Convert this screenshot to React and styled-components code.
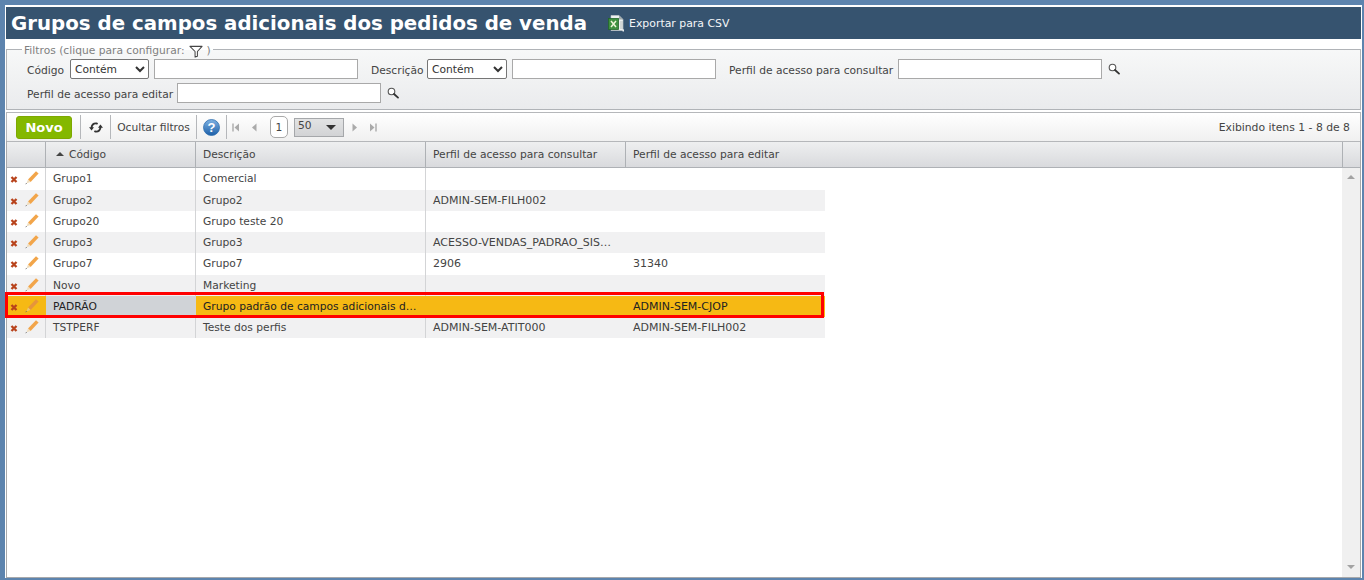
import React from "react";
import styled, { createGlobalStyle } from "styled-components";

const Global = createGlobalStyle`
  html, body { margin: 0; padding: 0; height: 100%; overflow: hidden; }
  body { font-family: "DejaVu Sans", Verdana, sans-serif; font-size: 10.7px; color: #444; background: #5d84ae; }
  * { box-sizing: border-box; }
`;

const Page = styled.div`
  width: 1364px; height: 580px; padding: 5px 2px 2px 5px; background: #5d84ae;
`;
const Frame = styled.div`
  width: 1357px; height: 573px; background: #fff; padding: 2px 0 0 1px; display: flex; flex-direction: column;
`;
const TitleBar = styled.div`
  height: 32px; flex: none; background: #36536f; display: flex; align-items: center; padding-left: 5px; margin-right: 1px;
`;
const Title = styled.h1`
  margin: 0; font: bold 19.8px "DejaVu Sans", sans-serif; color: #fff; white-space: nowrap;
`;
const ExportLink = styled.a`
  display: flex; align-items: center; gap: 4px; margin-left: 21px; color: #f4f6f8; font-size: 10.9px; padding-top: 1px;
`;
const Filters = styled.fieldset`
  margin: 4px 1px 0 0; padding: 0 0 0 20px; height: 67px; flex: none; border: 1px solid #b0b3b7;
  background: linear-gradient(#f7f8f8, #eaebed); min-width: 0;
`;
const Legend = styled.legend`
  margin-left: -5px; padding: 4px 2px 0; color: #7f7f7f; font-size: 10.7px; display: flex; align-items: center; gap: 4px; line-height: 12px; height: 12px;
`;
const FilterRows = styled.div`
  display: flex; flex-direction: column; gap: 4px; margin-top: 4px;
`;
const FilterRow = styled.div`
  display: flex; align-items: center; height: 20px;
`;
const Label = styled.label`
  color: #444; font-size: 10.7px; white-space: nowrap; flex: none; width: ${p => p.$w}px; margin-left: ${p => p.$ml || 0}px; padding-top: 3px;
`;
const Select = styled.select`
  width: ${p => p.$w}px; height: 20px; font: 10.7px "DejaVu Sans", sans-serif; color: #333; background: #fff; border: 1px solid #767676; border-radius: 2px; margin-right: 5px; padding: 0; flex: none;
`;
const TextInput = styled.input`
  width: 204px; height: 20px; border: 1px solid #a9a9a9; background: #fff; padding: 0 2px; flex: none;
`;
const SearchIcon = styled.svg`
  width: 12px; height: 12px; margin-left: 6px; flex: none;
`;
const Toolbar = styled.div`
  margin: 2px 1px 0 0; height: 29px; flex: none; border: 1px solid #b5b7ba; border-bottom: 0; background: linear-gradient(#fff, #f0f0f0); display: flex; align-items: center; padding-left: 9px;
`;
const NewButton = styled.button`
  width: 56px; height: 23px; border: 1px solid #7ea800; border-radius: 3px; background: #84b800; color: #fff; font: bold 13px "DejaVu Sans", sans-serif; padding: 0; margin-right: 8px; flex: none;
`;
const ToolSection = styled.div`
  height: 24px; border-left: 1px solid #b5b7ba; display: flex; align-items: center; justify-content: center; color: #444; width: ${p => p.$w}px; flex: none; white-space: nowrap;
`;
const Pager = styled.div`
  display: flex; align-items: center; height: 24px; border-left: 1px solid #b5b7ba; padding-left: 5px;
`;
const PageNumber = styled.span`
  width: 18px; height: 22px; border: 1px solid #a9a9a9; border-radius: 5px; background: #fff; display: flex; align-items: center; justify-content: center; color: #444; margin-right: 6px;
`;
const PageSize = styled.span`
  width: 50px; height: 19px; border: 1px solid #a5a7aa; background: linear-gradient(#e2e3e4, #d2d3d5); display: flex; justify-content: space-between; align-items: center; padding: 0 7px 3px 3px; color: #444; margin-right: 7px;
`;
const PagerArrow = styled.svg`
  width: 8px; height: 11px; flex: none; margin-right: ${p => p.$mr}px;
`;
const ItemCount = styled.span`
  margin-left: auto; padding-right: 10px; color: #444; font-size: 10.8px;
`;
const Grid = styled.div`
  margin-right: 1px; flex: 1; min-height: 0; border: 1px solid #a8a9ab; border-top: 0; display: flex; flex-direction: column;
`;
const HeaderRow = styled.div`
  height: 27px; flex: none; display: flex; background: linear-gradient(#eeeff0, #d9dadd); border-top: 1px solid #b5b7ba; border-bottom: 1px solid #aeb1b5;
`;
const HeaderCell = styled.div`
  width: ${p => p.$w}px; flex: ${p => (p.$grow ? 1 : "none")}; border-right: ${p => (p.$last ? 0 : "1px solid #aeb1b5")}; display: flex; align-items: center; padding-left: ${p => p.$pl ?? 7}px; gap: 5px; color: #444; white-space: nowrap;
`;
const SortArrow = styled.span`
  width: 0; height: 0; border-left: 4px solid transparent; border-right: 4px solid transparent; border-bottom: 4px solid #444; margin-top: -1px;
`;
const GridBody = styled.div`
  flex: 1; min-height: 0; display: flex;
`;
const Rows = styled.div`
  flex: 1; min-width: 0; padding-top: 0.25px;
`;
const Row = styled.div`
  width: 818px; height: 21.25px; display: flex; background: ${p => (p.$selected ? "#f6b914" : p.$alt ? "#f1f1f2" : "#fff")}; color: ${p => (p.$selected ? "#222" : "#444")}; position: relative;
  ${p => p.$selected ? `&::after { content: ""; position: absolute; top: -4px; bottom: -1px; left: -2px; right: 1px; border: 3px solid #f00; z-index: 1; }` : ""}
`;
const ActionCell = styled.div`
  width: 39px; flex: none; display: flex; align-items: center; padding-left: 3px; gap: 8px; border-right: 1px solid ${p => (p.$selected ? "transparent" : "#d3d4d6")};
`;
const Cell = styled.div`
  width: ${p => p.$w}px; flex: none; padding: 0 ${p => p.$pr ?? 10}px 0 7px; line-height: 21px; white-space: nowrap; overflow: hidden; text-overflow: ellipsis;
  font-size: ${p => (p.$upper ? "11px" : "inherit")};
  border-right: ${p => (p.$first ? "1px solid #d3d4d6" : 0)};
  background: ${p => (p.$key ? "#d0d3d7" : "transparent")};
`;
const Scrollbar = styled.div`
  width: 18px; flex: none; background: #f0f0f0; display: flex; flex-direction: column; justify-content: space-between; align-items: center; padding: 7px 0 8px;
`;
const ScrollArrow = styled.span`
  width: 0; height: 0; border-left: 4px solid transparent; border-right: 4px solid transparent;
  ${p => p.$up ? "border-bottom: 4px solid #a3a3a3;" : "border-top: 4px solid #a3a3a3;"}
`;

const Cross = () => (
  <svg width="8" height="7" viewBox="0 0 8 7" style={{ flex: "none", marginTop: 2 }}>
    <path d="M1.5 1 6.5 6M6.5 1 1.5 6" stroke="#b8431c" strokeWidth="2.3" />
  </svg>
);
const Pencil = ({ faded }) => (
  <svg width="14" height="15" viewBox="0 0 14 15" style={{ flex: "none", marginTop: -2, marginLeft: -1 }}>
    <path d="M3 9.6 11 1.2 13.6 3.6 5.6 12Z" fill={faded ? "#e6953a" : "#f2a54a"} />
    <path d="M3 9.6 5.6 12 1.6 13.2Z" fill={faded ? "#e9c77a" : "#efdcbc"} />
    <path d="M1.6 13.2 .6 14.2" stroke="#666" strokeWidth="1" />
  </svg>
);
const Magnifier = () => (
  <SearchIcon viewBox="0 0 12 12">
    <circle cx="4.5" cy="4.5" r="3.3" fill="#fff" stroke="#555" strokeWidth="1.1" />
    <path d="M7 7 11 10.6" stroke="#333" strokeWidth="1.8" strokeLinecap="round" />
  </SearchIcon>
);
const Funnel = () => (
  <svg width="14" height="13" viewBox="0 0 15 13">
    <path d="M1 1H14L9 6.5V11.5L6.5 12.5V6.5Z" fill="#fff" stroke="#444" strokeWidth="1.1" strokeLinejoin="round" />
  </svg>
);
const Excel = () => (
  <svg width="17" height="17" viewBox="0 0 17 17">
    <path d="M3 0.5H11L15 4.5V15.5H3Z" fill="#eef1f1" stroke="#c8cdcd" strokeWidth=".6" />
    <path d="M11 .5V4.5H15Z" fill="#9ea8a8" />
    <rect x="0.5" y="3.5" width="10" height="11" fill="#3f9140" stroke="#24682a" strokeWidth=".8" />
    <path d="M3 6 8 12M8 6 3 12" stroke="#eef6d8" strokeWidth="1.5" />
    <path d="M12 13h3M12 11h3M12 9h3M12 7h3" stroke="#aab3b3" strokeWidth=".8" />
    <path d="M15.5 14.5 15 16.5" stroke="#fff" strokeWidth="1.2" />
  </svg>
);
const Refresh = () => (
  <svg width="14" height="13" viewBox="0 0 14 13">
    <path d="M2.6 7C2.4 4.2 4.4 2 7.6 2.4L8.6 3" fill="none" stroke="#333" strokeWidth="1.9" />
    <path d="M0 6.2H5L2.6 9.4Z" fill="#333" />
    <path d="M11.4 6C11.6 8.8 9.6 11 6.4 10.6L5.4 10" fill="none" stroke="#333" strokeWidth="1.9" />
    <path d="M9 6.8H14L11.4 3.6Z" fill="#333" />
  </svg>
);
const Help = () => (
  <svg width="17" height="17" viewBox="0 0 17 17">
    <defs>
      <linearGradient id="helpFill" x1="0" y1="0" x2="0" y2="1">
        <stop offset="0" stopColor="#7fb2e3" />
        <stop offset="1" stopColor="#1c5fa8" />
      </linearGradient>
    </defs>
    <circle cx="8.5" cy="8.5" r="8" fill="url(#helpFill)" stroke="#2f6eae" strokeWidth=".8" />
    <text x="8.5" y="13" textAnchor="middle" fontFamily="Liberation Sans, sans-serif" fontWeight="bold" fontSize="13" fill="#fff">?</text>
  </svg>
);
const First = () => (
  <PagerArrow $mr={10} viewBox="0 0 8 11"><path d="M1 1.5V9.5" stroke="#aaa" strokeWidth="1.4" /><path d="M7 1.5V9.5L2.5 5.5Z" fill="#aaa" /></PagerArrow>
);
const Prev = () => (
  <PagerArrow $mr={12} viewBox="0 0 8 11"><path d="M6.5 1.5V9.5L2 5.5Z" fill="#aaa" /></PagerArrow>
);
const Next = () => (
  <PagerArrow $mr={10} viewBox="0 0 8 11"><path d="M1.5 1.5V9.5L6 5.5Z" fill="#aaa" /></PagerArrow>
);
const Last = () => (
  <PagerArrow $mr={0} viewBox="0 0 8 11"><path d="M1 1.5V9.5L5.5 5.5Z" fill="#aaa" /><path d="M7 1.5V9.5" stroke="#aaa" strokeWidth="1.4" /></PagerArrow>
);

const rows = [
  ["Grupo1", "Comercial", "", ""],
  ["Grupo2", "Grupo2", "ADMIN-SEM-FILH002", ""],
  ["Grupo20", "Grupo teste 20", "", ""],
  ["Grupo3", "Grupo3", "ACESSO-VENDAS_PADRAO_SISTEMA", ""],
  ["Grupo7", "Grupo7", "2906", "31340"],
  ["Novo", "Marketing", "", ""],
  ["PADRÃO", "Grupo padrão de campos adicionais dos pedidos de venda", "", "ADMIN-SEM-CJOP"],
  ["TSTPERF", "Teste dos perfis", "ADMIN-SEM-ATIT000", "ADMIN-SEM-FILH002"],
];

export default function App() {
  return (
    <>
      <Global />
      <Page>
        <Frame>
          <TitleBar>
            <Title>Grupos de campos adicionais dos pedidos de venda</Title>
            <ExportLink><Excel />Exportar para CSV</ExportLink>
          </TitleBar>
          <Filters>
            <Legend>Filtros (clique para configurar: <Funnel />)</Legend>
            <FilterRows>
              <FilterRow>
                <Label $w={43}>Código</Label>
                <Select $w={79} defaultValue="c"><option value="c">Contém</option></Select>
                <TextInput />
                <Label $ml={13} $w={56}>Descrição</Label>
                <Select $w={80} defaultValue="c"><option value="c">Contém</option></Select>
                <TextInput />
                <Label $ml={13} $w={169}>Perfil de acesso para consultar</Label>
                <TextInput />
                <Magnifier />
              </FilterRow>
              <FilterRow>
                <Label $w={150}>Perfil de acesso para editar</Label>
                <TextInput />
                <Magnifier />
              </FilterRow>
            </FilterRows>
          </Filters>
          <Toolbar>
            <NewButton>Novo</NewButton>
            <ToolSection $w={30}><Refresh /></ToolSection>
            <ToolSection $w={86}>Ocultar filtros</ToolSection>
            <ToolSection $w={30}><Help /></ToolSection>
            <Pager>
              <First /><Prev />
              <PageNumber>1</PageNumber>
              <PageSize>50<svg width="10" height="5" viewBox="0 0 10 5" style={{ marginTop: 4 }}><path d="M0 0H10L5 5Z" fill="#333" /></svg></PageSize>
              <Next /><Last />
            </Pager>
            <ItemCount>Exibindo itens 1 - 8 de 8</ItemCount>
          </Toolbar>
          <Grid>
            <HeaderRow>
              <HeaderCell $w={39} />
              <HeaderCell $w={150} $pl={10}><SortArrow />Código</HeaderCell>
              <HeaderCell $w={230}>Descrição</HeaderCell>
              <HeaderCell $w={200}>Perfil de acesso para consultar</HeaderCell>
              <HeaderCell $w={717}>Perfil de acesso para editar</HeaderCell>
              <HeaderCell $grow $last />
            </HeaderRow>
            <GridBody>
              <Rows>
                {rows.map((r, i) => (
                  <Row key={r[0]} $alt={i % 2 === 1} $selected={i === 6}>
                    <ActionCell $selected={i === 6}><Cross /><Pencil faded={i === 6} /></ActionCell>
                    <Cell $w={150} $first $key={i === 6}>{r[0]}</Cell>
                    <Cell $w={230} $pr={7} $first={i !== 6}>{r[1]}</Cell>
                    <Cell $w={200} $upper>{r[2]}</Cell>
                    <Cell $w={199} $upper>{r[3]}</Cell>
                  </Row>
                ))}
              </Rows>
              <Scrollbar><ScrollArrow $up /><ScrollArrow /></Scrollbar>
            </GridBody>
          </Grid>
        </Frame>
      </Page>
    </>
  );
}
